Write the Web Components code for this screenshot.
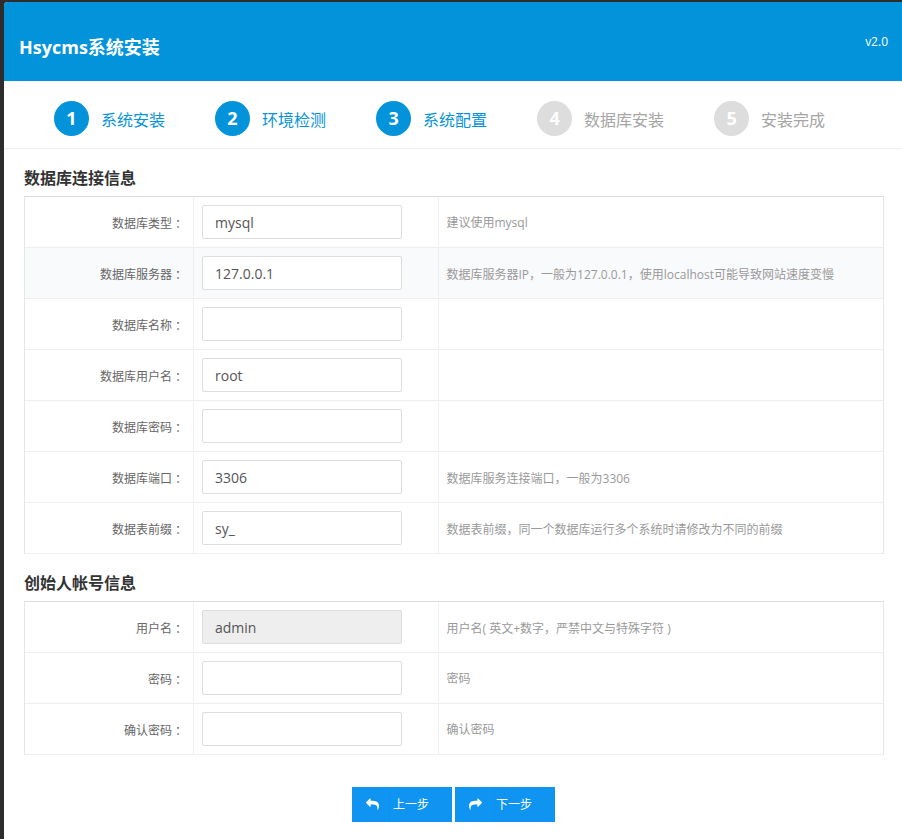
<!DOCTYPE html>
<html lang="zh">
<head>
<meta charset="utf-8">
<title>Hsycms系统安装</title>
<style>
    html, body {
        margin: 0;
        padding: 0;
        height: 100%;
        overflow: hidden;
        background: #2D2D2D;
        font-family: 'Open Sans', 'Noto Sans CJK SC', sans-serif;
    }
    install-app {
        margin: 2px 0 0 4px;
    }
    /* centred full-width punctuation, as in the original font */
    form-row .p {
        font-family: 'Noto Sans CJK TC', sans-serif;
    }
</style>
</head>
<body>
<install-app>
    <install-header slot="header" version="v2.0">Hsycms系统安装</install-header>
    <install-steps slot="steps">
        <install-step num="1" active>系统安装</install-step>
        <install-step num="2" active>环境检测</install-step>
        <install-step num="3" active>系统配置</install-step>
        <install-step num="4">数据库安装</install-step>
        <install-step num="5">安装完成</install-step>
    </install-steps>
    <form-section title-text="数据库连接信息">
        <form-row label="数据库类型" value="mysql">建议使用mysql</form-row>
        <form-row label="数据库服务器" value="127.0.0.1" shaded>数据库服务器IP<span class="p">，</span>一般为127.0.0.1<span class="p">，</span>使用localhost可能导致网站速度变慢</form-row>
        <form-row label="数据库名称"></form-row>
        <form-row label="数据库用户名" value="root"></form-row>
        <form-row label="数据库密码"></form-row>
        <form-row label="数据库端口" value="3306">数据库服务连接端口<span class="p">，</span>一般为3306</form-row>
        <form-row label="数据表前缀" value="sy_">数据表前缀<span class="p">，</span>同一个数据库运行多个系统时请修改为不同的前缀</form-row>
    </form-section>
    <form-section title-text="创始人帐号信息">
        <form-row label="用户名" value="admin" disabled>用户名( 英文+数字<span class="p">，</span>严禁中文与特殊字符 )</form-row>
        <form-row label="密码">密码</form-row>
        <form-row label="确认密码">确认密码</form-row>
    </form-section>
    <install-actions>
        <step-button icon="reply">上一步</step-button>
        <step-button icon="share">下一步</step-button>
    </install-actions>
</install-app>

<script>
'use strict';

(function() {
    const FONT = "'Open Sans', 'Noto Sans CJK SC', sans-serif";
    const ARROW = 'M1792 1120q0 166-127 451-3 7-10.5 24t-13.5 30-13 22q-12 17-28 17-15 0-23.5-10t-8.5-25q0-9 2.5-26.5t2.5-23.5q5-68 5-123 0-101-17.5-181t-48.5-138.5-80-101-105.5-69.5-133-42.5-154-21.5-175.5-6h-224v256q0 26-19 45t-45 19-45-19l-512-512q-19-19-19-45t19-45l512-512q19-19 45-19t45 19 19 45v256h224q713 0 875 403 53 134 53 333z';

    class InstallApp extends HTMLElement {
        constructor() {
            super();
            const shadow = this.attachShadow({ mode: 'open' });
            shadow.innerHTML = `
            <style>
                :host {
                    display: block;
                    height: 837px;
                    background: #FFF;
                    border-top-left-radius: 4px;
                    overflow: hidden;
                    font-family: ${FONT};
                }
            </style>
            <slot name="header"></slot>
            <slot name="steps"></slot>
            <slot></slot>
            `;
        }
    }

    class InstallHeader extends HTMLElement {
        constructor() {
            super();
            const shadow = this.attachShadow({ mode: 'open' });
            shadow.innerHTML = `
            <style>
                :host {
                    display: flex;
                    justify-content: space-between;
                    height: 79px;
                    padding: 0 14px 0 15px;
                    background: #0393DA;
                    color: #FFF;
                }
                h1 {
                    margin: 32px 0 0 0;
                    font-size: 18px;
                    line-height: 26px;
                    font-weight: 700;
                }
                span {
                    margin-top: 31px;
                    font-size: 12px;
                    line-height: 18px;
                }
            </style>
            <h1><slot></slot></h1>
            <span>${this.getAttribute('version') || ''}</span>
            `;
        }
    }

    class InstallSteps extends HTMLElement {
        constructor() {
            super();
            const shadow = this.attachShadow({ mode: 'open' });
            shadow.innerHTML = `
            <style>
                :host {
                    display: flex;
                    align-items: flex-start;
                    gap: 50px;
                    box-sizing: border-box;
                    height: 68px;
                    padding: 20px 0 0 50px;
                    border-bottom: 1px solid #EEE;
                }
            </style>
            <slot></slot>
            `;
        }
    }

    class InstallStep extends HTMLElement {
        constructor() {
            super();
            const shadow = this.attachShadow({ mode: 'open' });
            shadow.innerHTML = `
            <style>
                :host {
                    display: flex;
                    align-items: center;
                    gap: 12px;
                    color: #A5A5A5;
                    font-size: 16px;
                }
                :host([active]) {
                    color: #0594DB;
                }
                .num {
                    width: 35px;
                    height: 35px;
                    border-radius: 50%;
                    background: #DDD;
                    color: #FFF;
                    font-size: 18px;
                    font-weight: 700;
                    line-height: 35px;
                    text-align: center;
                }
                :host([active]) .num {
                    background: #0393DA;
                }
            </style>
            <div class="num">${this.getAttribute('num')}</div>
            <div><slot></slot></div>
            `;
        }
    }

    class FormSection extends HTMLElement {
        constructor() {
            super();
            const shadow = this.attachShadow({ mode: 'open' });
            shadow.innerHTML = `
            <style>
                :host {
                    display: block;
                    padding: 0 18px 0 20px;
                }
                h2 {
                    margin: 0;
                    padding-top: 15px;
                    height: 32px;
                    font-size: 16px;
                    line-height: 28px;
                    font-weight: 700;
                    color: #333;
                }
                .table {
                    display: block;
                    border: 1px solid #E6E6E6;
                    border-top-color: #DDD;
                    border-bottom: 0;
                }
            </style>
            <h2>${this.getAttribute('title-text') || ''}</h2>
            <div class="table"><slot></slot></div>
            `;
        }
    }

    class FormRow extends HTMLElement {
        constructor() {
            super();
            const value = this.getAttribute('value') || '';
            const shadow = this.attachShadow({ mode: 'open' });
            shadow.innerHTML = `
            <style>
                :host {
                    display: grid;
                    grid-template-columns: 168px 245px 1fr;
                    grid-template-rows: 50px;
                    height: 50px;
                    border-bottom: 1px solid #EEE;
                    font-size: 12px;
                }
                :host([shaded]) {
                    background: #F9FAFC;
                }
                .label {
                    display: flex;
                    align-items: center;
                    justify-content: flex-end;
                    box-sizing: border-box;
                    padding: 2px 9px 0 0;
                    color: #666;
                }
                .colon {
                    font-family: 'Noto Sans CJK TC', sans-serif;
                }
                .cell {
                    display: flex;
                    align-items: center;
                    border-left: 1px solid #EEE;
                    padding-left: 8px;
                }
                .field {
                    box-sizing: border-box;
                    width: 200px;
                    height: 34px;
                    padding: 0 12px;
                    background: #FFF;
                    border: 1px solid #DDD;
                    border-radius: 2px;
                    color: #555;
                    font-size: 14px;
                    line-height: 33px;
                }
                :host([disabled]) .field {
                    background: #EEE;
                }
                .hint {
                    display: block;
                    color: #999;
                    line-height: 52px;
                    padding-left: 7.5px;
                }
            </style>
            <div class="label">${this.getAttribute('label') || ''}<span class="colon">：</span></div>
            <div class="cell"><div class="field">${value}</div></div>
            <div class="cell hint"><slot></slot></div>
            `;
        }
    }

    class InstallActions extends HTMLElement {
        constructor() {
            super();
            const shadow = this.attachShadow({ mode: 'open' });
            shadow.innerHTML = `
            <style>
                :host {
                    display: flex;
                    justify-content: center;
                    gap: 3px;
                    padding-top: 32px;
                    padding-left: 1px;
                }
            </style>
            <slot></slot>
            `;
        }
    }

    class StepButton extends HTMLElement {
        constructor() {
            super();
            const flip = this.getAttribute('icon') === 'share' ? ' transform="translate(1792 0) scale(-1 1)"' : '';
            const shadow = this.attachShadow({ mode: 'open' });
            shadow.innerHTML = `
            <style>
                :host {
                    display: flex;
                    width: 100px;
                    height: 35px;
                    background: #1094F2;
                    color: #FFF;
                    font-size: 12px;
                    line-height: 35px;
                }
                .icon {
                    display: flex;
                    align-items: center;
                    justify-content: center;
                    box-sizing: border-box;
                    width: 35px;
                    padding-left: 6px;
                    border-right: 1px solid #0A9BF5;
                }
                svg {
                    width: 13px;
                    height: 13px;
                    fill: #FFF;
                }
                .text {
                    padding-left: 6px;
                }
            </style>
            <div class="icon"><svg viewBox="0 0 1792 1792"><path${flip} d="${ARROW}"/></svg></div>
            <div class="text"><slot></slot></div>
            `;
        }
    }

    customElements.define('install-app', InstallApp);
    customElements.define('install-header', InstallHeader);
    customElements.define('install-steps', InstallSteps);
    customElements.define('install-step', InstallStep);
    customElements.define('form-section', FormSection);
    customElements.define('form-row', FormRow);
    customElements.define('install-actions', InstallActions);
    customElements.define('step-button', StepButton);
})();
</script>
</body>
</html>
